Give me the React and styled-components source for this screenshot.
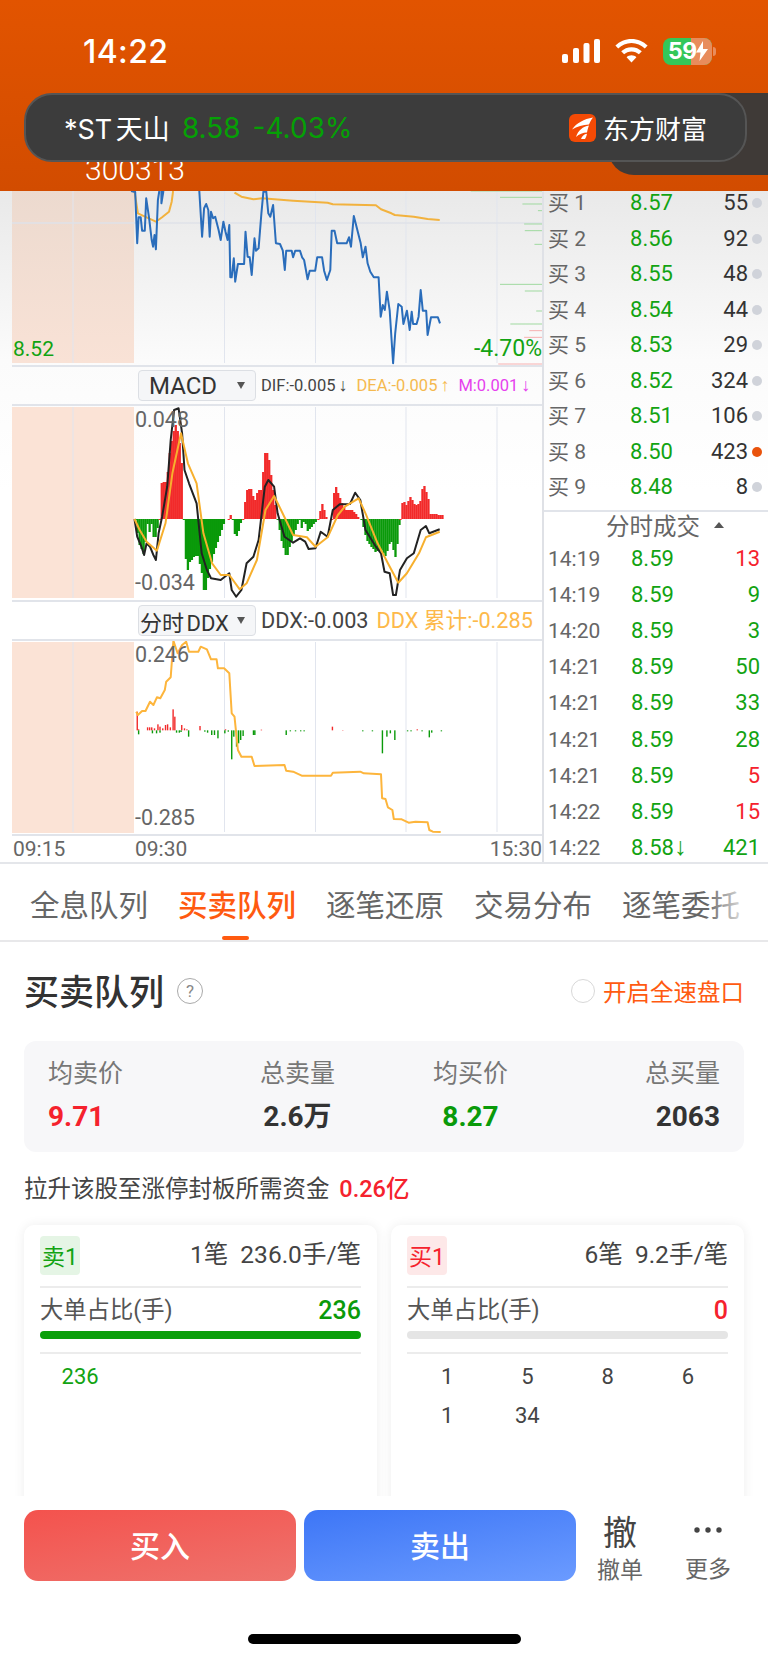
import React from 'react'
import styled, { createGlobalStyle } from 'styled-components'

const FONT = `Roboto, "Noto Sans CJK SC", sans-serif`
const GREEN = '#12a312'
const RED = '#f5222d'
const ORANGE = '#ff5a10'

const BUY_ROWS = [
  ['买 1', '8.57', '55'],
  ['买 2', '8.56', '92'],
  ['买 3', '8.55', '48'],
  ['买 4', '8.54', '44'],
  ['买 5', '8.53', '29'],
  ['买 6', '8.52', '324'],
  ['买 7', '8.51', '106'],
  ['买 8', '8.50', '423', true],
  ['买 9', '8.48', '8'],
]

const TRADES = [
  ['14:19', '8.59', '13', 'up'],
  ['14:19', '8.59', '9'],
  ['14:20', '8.59', '3'],
  ['14:21', '8.59', '50'],
  ['14:21', '8.59', '33'],
  ['14:21', '8.59', '28'],
  ['14:21', '8.59', '5', 'up'],
  ['14:22', '8.59', '15', 'up'],
  ['14:22', '8.58', '421', 'down', true],
]

const TABS = ['全息队列', '买卖队列', '逐笔还原', '交易分布', '逐笔委托']

// chart traces, noted as x,y in the zoomed crops (x / 2.9, y / 3)
const PRICE_A = [380,33, 392,36, 398,190, 402,112, 408,112, 412,152, 420,152, 424,55, 432,112, 440,180, 444,200, 448,165, 452,208, 458,60, 462,33]
const PRICE_B = [468,33, 468,70, 474,33]
const PRICE_C = [578,33, 586,170, 592,85, 598,72, 604,90, 608,170, 612,95, 618,115, 624,110, 634,150, 640,180, 648,125, 654,155, 660,180, 665,135, 668,292, 672,292, 678,235, 682,305, 690,252, 708,252, 712,155, 718,230, 724,232, 730,285, 738,175, 742,212, 750,205, 758,100, 764,35, 772,33, 778,100, 784,110, 792,75, 800,190, 812,192, 820,212, 826,270, 830,212, 846,212, 850,232, 856,212, 870,212, 876,232, 882,240, 892,298, 898,272, 914,272, 920,232, 934,232, 940,272, 948,300, 958,270, 962,152, 970,152, 978,190, 1005,190, 1012,172, 1018,200, 1026,108, 1040,165, 1046,190, 1052,232, 1060,200, 1066,250, 1074,275, 1084,292, 1098,292, 1104,410, 1110,375, 1116,390, 1122,335, 1130,392, 1140,550, 1146,460, 1155,372, 1165,380, 1170,432, 1180,392, 1188,450, 1194,395, 1198,432, 1208,432, 1214,410, 1220,330, 1226,392, 1236,392, 1240,465, 1250,412, 1270,412, 1276,430]
const AVG_A = [390,33, 400,100, 425,112, 452,125, 470,112, 490,95, 498,65, 502,33]
const AVG_B = [680,38, 700,50, 735,58, 760,55, 850,62, 950,68, 965,73, 1090,76, 1105,88, 1135,100, 1145,105, 1200,110, 1240,117, 1275,120]
const VOLUME = [
  [1365,33,'g'], [1450,52,'g'], [1515,72,'g'], [1560,92,'g'], [1520,132,'g'], [1522,152,'g'], [1550,193,'g'],
  [1450,313,'g'], [1522,333,'g'], [1555,393,'g'], [1480,432,'g'], [1535,452,'r'], [1520,472,'r'], [1445,552,'r'],
]

const MACD_HIST = [
  ['g', [390,357, 400,430, 415,465, 425,370, 430,400, 436,370, 442,410, 450,410, 458,357]],
  ['r', [460,357, 462,250, 480,245, 490,150, 505,70, 515,100, 525,200, 528,357]],
  ['g', [530,357, 535,470, 540,515, 548,485, 560,470, 570,465, 585,530, 590,595, 600,530, 615,470, 630,420, 650,360]],
  ['r', [660,357, 667,342, 670,357]],
  ['g', [672,357, 680,420, 690,390, 698,357]],
  ['r', [702,357, 712,270, 725,265, 735,305, 745,270, 755,270, 765,160, 775,160, 785,240, 800,357]],
  ['g', [802,357, 815,430, 828,475, 840,430, 865,357]],
  ['g', [866,357, 870,390, 880,360, 890,395, 918,357]],
  ['r', [920,357, 932,310, 945,357]],
  ['r', [960,357, 968,250, 985,300, 1000,330, 1020,330, 1040,357]],
  ['g', [1045,357, 1060,420, 1085,455, 1105,450, 1115,470, 1130,420, 1145,475, 1157,357]],
  ['r', [1158,357, 1165,300, 1175,315, 1188,290, 1200,315, 1215,310, 1225,248, 1240,300, 1245,342, 1280,345, 1280,357]],
]
const MACD_DIF = [390,357, 398,410, 410,440, 418,465, 425,430, 435,440, 445,465, 452,480, 460,400, 470,350, 485,260, 495,120, 505,30, 518,25, 528,100, 535,210, 548,250, 570,310, 585,460, 600,510, 612,535, 640,540, 665,520, 672,570, 685,590, 700,570, 715,490, 735,470, 750,420, 768,260, 778,240, 795,260, 805,340, 825,410, 850,428, 870,415, 885,425, 895,447, 915,445, 930,395, 950,410, 965,330, 985,313, 1015,312, 1030,278, 1045,300, 1060,390, 1090,440, 1105,460, 1115,515, 1130,520, 1140,585, 1148,585, 1160,510, 1180,475, 1200,460, 1220,390, 1235,378, 1245,400, 1275,388]
const MACD_DEA = [390,357, 405,390, 425,425, 455,452, 480,370, 500,220, 525,100, 545,190, 570,250, 590,400, 615,490, 640,525, 665,525, 695,568, 715,550, 745,480, 770,330, 795,288, 815,330, 850,405, 890,412, 915,440, 950,412, 980,345, 1000,320, 1040,295, 1060,340, 1095,430, 1125,490, 1155,548, 1180,520, 1215,460, 1235,412, 1275,395]

const DDX_LINE = [395,335, 400,345, 412,333, 422,333, 435,305, 445,315, 455,292, 465,295, 478,270, 482,245, 495,232, 503,122, 515,160, 528,135, 540,125, 548,155, 575,155, 582,140, 600,148, 612,178, 628,178, 632,205, 650,205, 665,220, 672,340, 680,350, 690,450, 700,470, 730,470, 738,498, 825,495, 830,512, 850,515, 875,527, 960,527, 965,518, 1045,515, 1055,520, 1105,523, 1108,595, 1118,597, 1125,622, 1138,630, 1142,657, 1165,658, 1185,668, 1205,665, 1240,667, 1245,690, 1255,695, 1278,696]
const DDX_RED = [[396,335],[400,388],[426,382],[432,382],[438,382],[446,385],[456,373],[462,380],[470,385],[478,375],[484,373],[492,382],[500,328],[505,350],[525,375],[533,385],[540,388],[578,378],[652,388],[756,389],[962,380],[992,390],[1208,388]]
const DDX_GREEN = [[400,403],[440,400],[452,400],[462,398],[510,398],[518,398],[523,396],[545,410],[592,395],[600,398],[612,405],[620,405],[630,415],[650,400],[660,395],[670,478],[676,410],[684,440],[690,430],[696,420],[703,408],[733,405],[737,405],[828,405],[840,394],[855,394],[870,394],[880,394],[1050,394],[1078,394],[1107,460],[1120,410],[1130,400],[1143,420],[1180,394],[1190,394],[1222,394],[1243,412],[1250,398],[1278,394]]

const GRID_X = [73, 224.5, 315.5, 406, 497]

const toX = (zx) => zx / 2.9 - 12
const toPoints = (list, yOffset) => {
  const out = []
  for (let i = 0; i < list.length; i += 2) {
    out.push(`${toX(list[i]).toFixed(1)},${(list[i + 1] / 3 + yOffset).toFixed(1)}`)
  }
  return out.join(' ')
}

// sample the histogram outline into the stepped bars of the chart
const histBars = (list) => {
  const bars = []
  const first = list[0]
  const last = list[list.length - 2]
  for (let x = first; x <= last; x += 5.8) {
    let y = list[1]
    for (let i = 0; i < list.length - 2; i += 2) {
      if (x >= list[i] && x <= list[i + 2]) {
        const span = list[i + 2] - list[i] || 1
        y = list[i + 1] + ((x - list[i]) / span) * (list[i + 3] - list[i + 1])
        break
      }
    }
    bars.push([x, Math.round(y / 3) * 3])
  }
  return bars
}

function ChartBase({ height, bandTop, bandHeight, band = '#fbe3d6' }) {
  return (
    <>
      <rect x="0" y={bandTop} width="122" height={bandHeight} fill={band} />
      {GRID_X.map((x) => (
        <line key={x} x1={x - 12} x2={x - 12} y1={bandTop} y2={height} stroke="#e1e5ee" strokeWidth="1" />
      ))}
    </>
  )
}

function PriceChart() {
  const off = -11
  return (
    <ChartSvg width="530" height="174" viewBox="0 0 530 174">
      <defs>
        <linearGradient id="priceBand" x1="0" y1="0" x2="0" y2="1">
          <stop offset="0" stopColor="#ecdacf" />
          <stop offset="1" stopColor="#f9e2d6" />
        </linearGradient>
      </defs>
      <ChartBase height={172} bandTop={0} bandHeight={172} band="url(#priceBand)" />
      <line x1="0" x2="530" y1="32" y2="32" stroke="#dfe2e8" strokeWidth="1.5" />
      {VOLUME.map(([zx, zy, c]) => (
        <line
          key={zy}
          x1={toX(zx)}
          x2="530"
          y1={zy / 3 + off}
          y2={zy / 3 + off}
          stroke={c === 'g' ? '#9fd99f' : '#f7b0b0'}
          strokeWidth="1"
        />
      ))}
      <Trace points={toPoints(AVG_A, off)} stroke="#f2b23e" strokeWidth="2" />
      <Trace points={toPoints(AVG_B, off)} stroke="#f2b23e" strokeWidth="2" />
      <Trace points={toPoints(PRICE_A, off)} stroke="#2a6dbb" strokeWidth="2" />
      <Trace points={toPoints(PRICE_B, off)} stroke="#2a6dbb" strokeWidth="2" />
      <Trace points={toPoints(PRICE_C, off)} stroke="#2a6dbb" strokeWidth="2" />
    </ChartSvg>
  )
}

function MacdChart() {
  const off = -6
  return (
    <ChartSvg width="530" height="194" viewBox="0 0 530 194">
      <ChartBase height={192} bandTop={1} bandHeight={191} />
      {MACD_HIST.map(([c, list], i) => (
        <g key={i} fill={c === 'g' ? '#0a9a0a' : '#f22a2a'}>
          {histBars(list).map(([x, y]) => (
            <rect
              key={x}
              x={toX(x)}
              width="2.300"
              y={Math.min(y, 357) / 3 + off}
              height={Math.max(Math.abs(y - 357) / 3, 1)}
            />
          ))}
        </g>
      ))}
      <Trace points={toPoints(MACD_DIF, off)} stroke="#222" strokeWidth="2" />
      <Trace points={toPoints(MACD_DEA, off)} stroke="#f7b02e" strokeWidth="2" />
    </ChartSvg>
  )
}

function DdxChart() {
  const off = -41
  return (
    <ChartSvg width="530" height="193" viewBox="0 0 530 193">
      <ChartBase height={191} bandTop={1} bandHeight={191} />
      {DDX_RED.map(([zx, zy]) => (
        <rect key={zx} x={toX(zx)} width="1.4" y={zy / 3 + off} height={(391 - zy) / 3} fill="#f22a2a" />
      ))}
      {DDX_GREEN.map(([zx, zy]) => (
        <rect key={zx} x={toX(zx)} width="1.4" y={391 / 3 + off} height={(zy - 391) / 3} fill="#0a9a0a" />
      ))}
      <Trace points={toPoints(DDX_LINE, off)} stroke="#fdb53c" strokeWidth="2" />
    </ChartSvg>
  )
}

function WifiIcon() {
  return (
    <svg width="33" height="24" viewBox="0 0 33 24" fill="#fff">
      <path d="M16.5 0C10.2 0 4.6 2.5.4 6.6l2.8 3C6.7 6.2 11.4 4.1 16.5 4.1s9.8 2.1 13.3 5.5l2.8-3C28.4 2.5 22.8 0 16.5 0z" />
      <path d="M16.5 8.2c-4 0-7.6 1.6-10.3 4.1l2.9 3c1.9-1.8 4.5-2.9 7.4-2.9s5.5 1.1 7.4 2.9l2.9-3c-2.7-2.5-6.3-4.1-10.3-4.1z" />
      <path d="M16.5 16.3c-1.9 0-3.6.7-4.9 1.9l4.9 5.3 4.9-5.3c-1.3-1.2-3-1.9-4.9-1.9z" />
    </svg>
  )
}

function SignalIcon() {
  return (
    <svg width="38" height="24" viewBox="0 0 38 24" fill="#fff">
      <rect x="0" y="15" width="6" height="9" rx="2" />
      <rect x="11" y="9" width="6" height="15" rx="2" />
      <rect x="21.500" y="4" width="6" height="20" rx="2" />
      <rect x="32" y="0" width="6" height="24" rx="2" />
    </svg>
  )
}

function EastMoneyLogo() {
  return (
    <svg width="27" height="28" viewBox="0 0 27 28">
      <rect width="27" height="28" rx="6" fill="#f44a05" />
      <path d="M3 15.500C7.500 9 15 5 24 3.500c-2 2.500-3 4.500-4 7C14 11 8 12.500 3 15.500z" fill="#fff" />
      <path d="M7 23c2-6.500 7-10.500 13-11.500-1 2.500-1.500 4.500-2 7C14 18.500 10 20 7 23z" fill="#fff" />
      <path d="M12 25c1-3 3-4.800 6-5.300-.5 2-1 3.800-2 5.300z" fill="#fff" />
    </svg>
  )
}

function App() {
  return (
    <Page>
      <GlobalStyle />
      <Header>
        <StatusBar>
          <Time>14:22</Time>
          <StatusIcons>
            <SignalIcon />
            <WifiIcon />
            <Battery>
              <BatteryLevel>59</BatteryLevel>
              <BatteryCharge>
                <svg width="12" height="20" viewBox="0 0 12 20" fill="#fff">
                  <path d="M7 0L0 11.500h4.500L3.500 20 12 8H7z" />
                </svg>
              </BatteryCharge>
              <BatteryKnob />
            </Battery>
          </StatusIcons>
        </StatusBar>
        <StockCode>300313</StockCode>
        <BannerBackdrop />
        <Banner>
          <BannerName>*ST 天山</BannerName>
          <BannerQuote>8.58</BannerQuote>
          <BannerQuote>-4.03%</BannerQuote>
          <BannerBrand>
            <EastMoneyLogo />
            东方财富
          </BannerBrand>
        </Banner>
      </Header>

      <Market>
        <ChartColumn>
          <ChartPane>
            <PriceChart />
            <CornerLabel $left="1px" $bottom="5px" $color={GREEN}>8.52</CornerLabel>
            <CornerLabel $right="0" $bottom="5px" $size="23px" $color={GREEN}>-4.70%</CornerLabel>
          </ChartPane>
          <ChartToolbar>
            <IndicatorButton>
              <IndicatorName $size="24px">MACD</IndicatorName>
              <Caret />
            </IndicatorButton>
            <ReadoutGroup $size="16.500px" $gap="9px">
              <span>DIF:-0.005<SmallArrow>↓</SmallArrow></span>
              <Readout $color="#f5b94f">DEA:-0.005<SmallArrow>↑</SmallArrow></Readout>
              <Readout $color="#e640ee">M:0.001<SmallArrow>↓</SmallArrow></Readout>
            </ReadoutGroup>
          </ChartToolbar>
          <ChartPane $topLine>
            <MacdChart />
            <CornerLabel $left="123px" $top="3px" $size="21.500px" $color="#666">0.048</CornerLabel>
            <CornerLabel $left="123px" $bottom="6px" $size="21.500px" $color="#666">-0.034</CornerLabel>
          </ChartPane>
          <ChartToolbar>
            <IndicatorButton>
              <IndicatorName $size="22px">分时 DDX</IndicatorName>
              <Caret />
            </IndicatorButton>
            <ReadoutGroup $size="21.700px" $gap="8px">
              <span>DDX:-0.003</span>
              <Readout $color="#fdb94a">DDX 累计:-0.285</Readout>
            </ReadoutGroup>
          </ChartToolbar>
          <ChartPane $topLine>
            <DdxChart />
            <CornerLabel $left="123px" $top="3px" $size="21.500px" $color="#666">0.246</CornerLabel>
            <CornerLabel $left="123px" $bottom="5px" $size="21.500px" $color="#666">-0.285</CornerLabel>
          </ChartPane>
          <TimeAxis>
            <span>09:15</span>
            <span>09:30</span>
            <span>15:30</span>
          </TimeAxis>
        </ChartColumn>

        <SideColumn>
          <BuyList>
            {BUY_ROWS.map(([label, price, qty, hot]) => (
              <BuyRow key={label}>
                <RowLabel>{label}</RowLabel>
                <RowPrice>{price}</RowPrice>
                <RowQty>{qty}</RowQty>
                <QtyDot $hot={hot} />
              </BuyRow>
            ))}
          </BuyList>
          <TradesHead>
            分时成交
            <TradesCaret />
          </TradesHead>
          {TRADES.map(([time, price, qty, dir, falling], i) => (
            <TradeRow key={i}>
              <RowLabel>{time}</RowLabel>
              <TradePrice>
                {price}
                {falling && <PriceArrow>↓</PriceArrow>}
              </TradePrice>
              <TradeQty $up={dir === 'up'}>{qty}</TradeQty>
            </TradeRow>
          ))}
        </SideColumn>
      </Market>

      <Tabs>
        {TABS.map((t, i) => (
          <Tab key={t} $active={i === 1}>{t}</Tab>
        ))}
        <TabFade />
      </Tabs>

      <Detail>
        <TitleRow>
          <Title>买卖队列</Title>
          <HelpMark>?</HelpMark>
          <SpeedToggle>
            <Radio />
            开启全速盘口
          </SpeedToggle>
        </TitleRow>

        <StatsCard>
          <Stat $align="flex-start">
            <StatLabel>均卖价</StatLabel>
            <StatValue $color={RED}>9.71</StatValue>
          </Stat>
          <Stat $align="center">
            <StatLabel>总卖量</StatLabel>
            <StatValue>2.6万</StatValue>
          </Stat>
          <Stat $align="center">
            <StatLabel>均买价</StatLabel>
            <StatValue $color="#0a9a0a">8.27</StatValue>
          </Stat>
          <Stat $align="flex-end">
            <StatLabel>总买量</StatLabel>
            <StatValue>2063</StatValue>
          </Stat>
        </StatsCard>

        <FundLine>
          拉升该股至涨停封板所需资金 <FundValue>0.26亿</FundValue>
        </FundLine>

        <QueueCards>
          <QueueCard>
            <QueueHead>
              <QueueBadge $bg="#e5f5e5" $color={GREEN}>卖1</QueueBadge>
              <QueueMeta>1笔&nbsp;&nbsp;236.0手/笔</QueueMeta>
            </QueueHead>
            <ShareRow>
              大单占比(手)
              <ShareValue $color="#0a9a0a">236</ShareValue>
            </ShareRow>
            <ShareBar $color="#0a9f0a" />
            <OrderGrid $color={GREEN}>
              <span>236</span>
            </OrderGrid>
          </QueueCard>
          <QueueCard>
            <QueueHead>
              <QueueBadge $bg="#fde8e8" $color={RED}>买1</QueueBadge>
              <QueueMeta>6笔&nbsp;&nbsp;9.2手/笔</QueueMeta>
            </QueueHead>
            <ShareRow>
              大单占比(手)
              <ShareValue $color={RED}>0</ShareValue>
            </ShareRow>
            <ShareBar $color="#e5e5e5" />
            <OrderGrid $color="#444">
              {['1', '5', '8', '6', '1', '34'].map((n, i) => (
                <span key={i}>{n}</span>
              ))}
            </OrderGrid>
          </QueueCard>
        </QueueCards>
      </Detail>

      <BottomBar>
        <TradeBar>
          <TradeButton $from="#f4524d" $to="#ee736d">买入</TradeButton>
          <TradeButton $from="#3d76f6" $to="#6b9bff">卖出</TradeButton>
          <BarActions>
            <BarAction>
              <CancelGlyph>撤</CancelGlyph>
              <BarLabel>撤单</BarLabel>
            </BarAction>
            <BarAction>
              <CancelGlyph>
                <svg width="30" height="8" viewBox="0 0 30 8" fill="#444">
                  <circle cx="4" cy="4" r="2.700" />
                  <circle cx="15" cy="4" r="2.700" />
                  <circle cx="26" cy="4" r="2.700" />
                </svg>
              </CancelGlyph>
              <BarLabel>更多</BarLabel>
            </BarAction>
          </BarActions>
        </TradeBar>
        <HomeIndicator />
      </BottomBar>
    </Page>
  )
}

export default App

const GlobalStyle = createGlobalStyle`
  html, body {
    margin: 0;
    padding: 0;
    background: #fff;
    font-family: ${FONT};
  }
  * {
    box-sizing: border-box;
  }
`

const Page = styled.div`
  width: 768px;
  height: 1663px;
  overflow: hidden;
  display: flex;
  flex-direction: column;
  background: #fff;
`

const Header = styled.header`
  position: relative;
  height: 191px;
  flex-shrink: 0;
  overflow: hidden;
  background: linear-gradient(180deg, #e25400, #d24c00);
  color: #fff;
`

const StatusBar = styled.div`
  height: 30px;
  margin-top: 36px;
  padding: 0 56px 0 83px;
  display: flex;
  justify-content: space-between;
  align-items: center;
`

const Time = styled.div`
  font-family: Inter, sans-serif;
  font-size: 32px;
  font-weight: 500;
  letter-spacing: 0.4px;
`

const StatusIcons = styled.div`
  display: flex;
  align-items: center;
  gap: 15px;
`

const Battery = styled.div`
  position: relative;
  width: 49px;
  height: 27px;
  border-radius: 8px;
  background: #34c759;
  display: flex;
  align-items: center;
`

const BatteryLevel = styled.span`
  position: relative;
  z-index: 1;
  font-family: Inter, sans-serif;
  font-size: 23px;
  font-weight: 700;
  line-height: 27px;
  padding-left: 5px;
  letter-spacing: -0.5px;
`

const BatteryCharge = styled.div`
  position: absolute;
  top: 0;
  right: 0;
  width: 21px;
  height: 27px;
  border-radius: 0 8px 8px 0;
  background: #e88c5c;
  display: flex;
  align-items: center;
  justify-content: center;
`

const BatteryKnob = styled.div`
  position: absolute;
  top: 9px;
  right: -4px;
  width: 3px;
  height: 9px;
  border-radius: 0 3px 3px 0;
  background: #e88c5c;
`

const StockCode = styled.div`
  margin-top: 89px;
  padding-left: 85px;
  font-size: 30px;
  font-weight: 300;
  line-height: 30px;
`

const BannerBackdrop = styled.div`
  position: absolute;
  top: 93px;
  right: 0;
  width: 160px;
  height: 82px;
  border-radius: 0 0 0 26px;
  background: #3f3a37;
`

const Banner = styled.div`
  position: absolute;
  top: 93px;
  left: 24px;
  width: 723px;
  height: 69px;
  padding: 0 38px;
  display: flex;
  align-items: center;
  gap: 12px;
  border: 2px solid #555;
  border-radius: 28px;
  background: #3c3c3c;
`

const BannerName = styled.span`
  font-family: Inter, "Noto Sans CJK SC", sans-serif;
  font-size: 27px;
  word-spacing: -4px;
`

const BannerQuote = styled.span`
  font-family: Inter, sans-serif;
  font-size: 28px;
  color: #05a005;
`

const BannerBrand = styled.div`
  margin-left: auto;
  display: flex;
  align-items: center;
  gap: 7px;
  font-size: 26px;
`

const Market = styled.section`
  height: 673px;
  flex-shrink: 0;
  padding-left: 12px;
  display: flex;
  border-bottom: 2px solid #e4e6ea;
  background: linear-gradient(180deg, #e9e9e9 0, #fbfbfb 170px, #fff 300px);
`

const ChartColumn = styled.div`
  width: 530px;
  display: flex;
  flex-direction: column;
`

const ChartPane = styled.div`
  position: relative;
  border-top: ${(p) => (p.$topLine ? '2px solid #e1e4ea' : 'none')};
  border-bottom: 2px solid #e1e4ea;
`

const ChartSvg = styled.svg`
  display: block;
`

const Trace = styled.polyline`
  fill: none;
  stroke-linejoin: round;
`

const CornerLabel = styled.span`
  position: absolute;
  left: ${(p) => p.$left || 'auto'};
  right: ${(p) => p.$right || 'auto'};
  top: ${(p) => p.$top || 'auto'};
  bottom: ${(p) => p.$bottom || 'auto'};
  font-size: ${(p) => p.$size || '21px'};
  line-height: 22px;
  color: ${(p) => p.$color};
`

const ChartToolbar = styled.div`
  height: 37px;
  padding-left: 126px;
  display: flex;
  align-items: center;
  gap: 5px;
`

const IndicatorButton = styled.div`
  width: 118px;
  height: 31px;
  flex-shrink: 0;
  padding: 0 10px 0 1px;
  display: flex;
  align-items: center;
  justify-content: space-between;
  border: 1px solid #dcdfe4;
  border-radius: 4px;
  background: #f5f6f8;
`

const IndicatorName = styled.span`
  font-size: ${(p) => p.$size};
  color: #333;
  padding-left: ${(p) => (p.$size === '24px' ? '9px' : '0')};
  word-spacing: -3px;
  white-space: nowrap;
`

const Caret = styled.span`
  width: 0;
  height: 0;
  border-left: 4.5px solid transparent;
  border-right: 4.5px solid transparent;
  border-top: 7px solid #555;
`

const ReadoutGroup = styled.div`
  display: flex;
  align-items: baseline;
  gap: ${(p) => p.$gap};
  font-size: ${(p) => p.$size};
  line-height: 28px;
  color: #444;
  white-space: nowrap;
`

const Readout = styled.span`
  color: ${(p) => p.$color};
`

const SmallArrow = styled.span`
  margin-left: 3px;
  font-family: "Liberation Sans", sans-serif;
  font-size: 18px;
  line-height: 1;
`

const TimeAxis = styled.div`
  flex: 1;
  padding-left: 1px;
  display: grid;
  grid-template-columns: 122px 1fr auto;
  align-items: center;
  font-size: 21px;
  color: #666;
`

const SideColumn = styled.aside`
  flex: 1;
  border-left: 2px solid #dfe1e6;
`

const BuyList = styled.div`
  padding-bottom: 11px;
  display: flex;
  flex-direction: column;
  gap: 11.5px;
`

const BuyRow = styled.div`
  height: 24px;
  padding-left: 4px;
  display: grid;
  grid-template-columns: 50px 75px 75px 14px;
  align-items: center;
  font-size: 22px;
  line-height: 24px;
`

const RowLabel = styled.span`
  font-size: 21px;
  color: #666;
  white-space: nowrap;
`

const RowPrice = styled.span`
  text-align: right;
  color: ${GREEN};
`

const RowQty = styled.span`
  text-align: right;
  color: #333;
`

const QtyDot = styled.span`
  width: 10px;
  height: 10px;
  margin-left: 4px;
  border-radius: 50%;
  background: ${(p) => (p.$hot ? '#e9530c' : '#d0d3da')};
`

const TradesHead = styled.div`
  height: 31px;
  padding: 0 0 4px 62px;
  display: flex;
  align-items: center;
  gap: 14px;
  border-top: 2px solid #e1e4ea;
  font-size: 23.500px;
  color: #666;
`

const TradesCaret = styled.span`
  width: 0;
  height: 0;
  border-left: 5px solid transparent;
  border-right: 5px solid transparent;
  border-bottom: 6px solid #555;
`

const TradeRow = styled.div`
  height: 36.100px;
  padding: 0 8px 0 4px;
  display: grid;
  grid-template-columns: 83px 1fr auto;
  align-items: center;
  font-size: 22px;
  line-height: 26px;
`

const TradePrice = styled.span`
  color: ${GREEN};
`

const PriceArrow = styled.span`
  font-family: "Liberation Sans", sans-serif;
  font-size: 25px;
  line-height: 1;
`

const TradeQty = styled.span`
  color: ${(p) => (p.$up ? RED : GREEN)};
`

const Tabs = styled.nav`
  position: relative;
  height: 78px;
  flex-shrink: 0;
  padding: 0 0 0 30px;
  display: flex;
  gap: 31px;
  border-bottom: 2px solid #e8e8ea;
`

const Tab = styled.div`
  position: relative;
  width: 117px;
  padding-top: 22px;
  font-size: 29.500px;
  line-height: 40px;
  white-space: nowrap;
  color: ${(p) => (p.$active ? ORANGE : '#666')};
  font-weight: ${(p) => (p.$active ? 500 : 400)};
  &::after {
    content: '';
    display: ${(p) => (p.$active ? 'block' : 'none')};
    position: absolute;
    left: 44px;
    bottom: 0;
    width: 27px;
    height: 4px;
    border-radius: 2px;
    background: ${ORANGE};
  }
`

const TabFade = styled.div`
  position: absolute;
  top: 0;
  right: 0;
  width: 62px;
  height: 70px;
  background: linear-gradient(90deg, rgba(255, 255, 255, 0), rgba(255, 255, 255, 0.8) 60%, #fff);
`

const Detail = styled.section`
  height: 554px;
  flex-shrink: 0;
  padding: 0 24px;
  overflow: hidden;
`

const TitleRow = styled.div`
  height: 40px;
  margin-top: 29px;
  display: flex;
  align-items: center;
`

const Title = styled.h2`
  margin: 0 0 4px;
  font-size: 35px;
  font-weight: 500;
  color: #333;
`

const HelpMark = styled.span`
  width: 26px;
  height: 26px;
  margin-left: 13px;
  display: flex;
  align-items: center;
  justify-content: center;
  border: 1.5px solid #aaa;
  border-radius: 50%;
  font-size: 17px;
  color: #888;
`

const SpeedToggle = styled.div`
  margin-left: auto;
  display: flex;
  align-items: center;
  gap: 8px;
  font-size: 23.500px;
  color: ${ORANGE};
`

const Radio = styled.span`
  width: 24px;
  height: 24px;
  border: 1.5px solid #d8d8d8;
  border-radius: 50%;
`

const StatsCard = styled.div`
  height: 111px;
  margin-top: 30px;
  padding: 16px 24px 0;
  display: grid;
  grid-template-columns: 212px 173px 212px 75px;
  border-radius: 12px;
  background: #f7f7f9;
`

const Stat = styled.div`
  width: 75px;
  display: flex;
  flex-direction: column;
  align-items: ${(p) => p.$align};
  gap: 9px;
`

const StatLabel = styled.span`
  font-size: 25px;
  line-height: 34px;
  color: #777;
  white-space: nowrap;
`

const StatValue = styled.span`
  font-size: 28px;
  line-height: 34px;
  font-weight: 700;
  white-space: nowrap;
  color: ${(p) => p.$color || '#333'};
`

const FundLine = styled.div`
  height: 34px;
  margin-top: 20px;
  font-size: 23.500px;
  line-height: 34px;
  color: #444;
`

const FundValue = styled.span`
  margin-left: 4px;
  font-weight: 500;
  color: ${RED};
`

const QueueCards = styled.div`
  margin-top: 19px;
  display: grid;
  grid-template-columns: 353px 353px;
  gap: 14px;
`

const QueueCard = styled.div`
  height: 320px;
  padding: 10px 16px;
  border-radius: 10px;
  background: #fff;
  box-shadow: 0 0 12px rgba(0, 0, 0, 0.07);
`

const QueueHead = styled.div`
  padding-bottom: 11px;
  display: flex;
  align-items: center;
  justify-content: space-between;
  border-bottom: 2px solid #ececec;
`

const QueueBadge = styled.span`
  width: 40px;
  height: 39px;
  display: flex;
  align-items: center;
  justify-content: center;
  border-radius: 4px;
  background: ${(p) => p.$bg};
  color: ${(p) => p.$color};
  font-size: 23px;
`

const QueueMeta = styled.span`
  padding-bottom: 5px;
  font-size: 24.500px;
  color: #444;
`

const ShareRow = styled.div`
  height: 43px;
  padding-bottom: 4px;
  display: flex;
  align-items: center;
  justify-content: space-between;
  font-size: 23.300px;
  color: #555;
`

const ShareValue = styled.span`
  margin-top: 5px;
  font-size: 25px;
  font-weight: 500;
  color: ${(p) => p.$color};
`

const ShareBar = styled.div`
  height: 8px;
  border-radius: 4px;
  background: ${(p) => p.$color};
`

const OrderGrid = styled.div`
  margin-top: 13px;
  padding-top: 3px;
  display: grid;
  grid-template-columns: repeat(4, 1fr);
  grid-auto-rows: 39px;
  align-items: center;
  justify-items: center;
  border-top: 2px solid #ececec;
  font-size: 22px;
  color: ${(p) => p.$color};
`

const BottomBar = styled.footer`
  flex: 1;
  padding: 14px 24px 0;
  display: flex;
  flex-direction: column;
  background: #fff;
`

const TradeBar = styled.div`
  height: 74px;
  display: flex;
  gap: 8px;
`

const TradeButton = styled.button`
  width: 272px;
  height: 71px;
  padding: 0 0 4px;
  border: none;
  border-radius: 14px;
  background: linear-gradient(170deg, ${(p) => p.$from}, ${(p) => p.$to});
  color: #fff;
  font-family: ${FONT};
  font-size: 30px;
  font-weight: 500;
`

const BarActions = styled.div`
  margin-left: 13px;
  display: flex;
  gap: 42px;
`

const BarAction = styled.div`
  width: 46px;
  display: flex;
  flex-direction: column;
  align-items: center;
`

const CancelGlyph = styled.div`
  height: 40px;
  display: flex;
  align-items: center;
  justify-content: center;
  font-size: 34px;
  color: #444;
`

const BarLabel = styled.span`
  margin-top: 7px;
  font-size: 23px;
  line-height: 28px;
  color: #666;
  white-space: nowrap;
`

const HomeIndicator = styled.div`
  width: 273px;
  height: 10px;
  margin: 50px auto 0;
  border-radius: 5px;
  background: #000;
`
